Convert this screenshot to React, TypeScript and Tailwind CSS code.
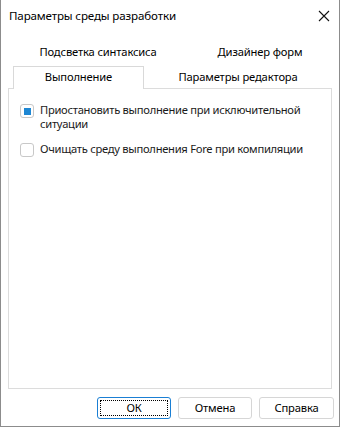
import React from 'react';

const font = { fontFamily: '"Noto Sans", "Liberation Sans", sans-serif' };

const Checkbox: React.FC<{ checked?: boolean; label: React.ReactNode }> = ({ checked, label }) => (
  <div className="flex items-start">
    <div className="mt-[1px] flex h-[14px] w-[14px] shrink-0 items-center justify-center rounded-[3px] border border-[#c8c8c8] bg-white">
      {checked && <div className="h-[7px] w-[7px] bg-[#1e87d3]" />}
    </div>
    <div className="ml-[6px] whitespace-nowrap text-[11.2px] leading-[14px] tracking-[-0.28px] text-[#1a1a1a]">
      {label}
    </div>
  </div>
);

export default function App() {
  return (
    <div
      style={font}
      className="flex h-[427px] w-[340px] flex-col border-x border-b border-[#8c8c8c] bg-white text-[11.2px] tracking-[-0.15px] text-black"
    >
      <div className="flex h-[32px] items-center justify-between pl-[8px] pr-[8px]">
        <span className="text-[11.6px]">Параметры среды разработки</span>
        <svg width="12" height="12" viewBox="0 0 12 12" className="mr-[1px]">
          <path d="M1 1 L11 11 M11 1 L1 11" stroke="#111" strokeWidth="1.1" />
        </svg>
      </div>

      <div className="mx-[7px] flex h-[34px] items-end whitespace-nowrap pb-[6px]">
        <div className="w-[180px] text-center leading-[16px]">Подсветка синтаксиса</div>
        <div className="flex-1 text-center leading-[16px]">Дизайнер форм</div>
      </div>

      <div className="mx-[7px] flex h-[22px] whitespace-nowrap">
        <div className="relative z-10 ml-[5px] -mb-px flex h-[23px] w-[131px] items-center justify-center border-x border-t border-[#d9d9d9] bg-white pb-[1px]">
          Выполнение
        </div>
        <div className="flex flex-1 items-center justify-center pt-[1px]">Параметры редактора</div>
      </div>

      <div className="mx-[7px] flex flex-1 flex-col gap-[11px] border border-[#dcdcdc] pl-[11px] pt-[14px]">
        <Checkbox
          checked
          label={
            <>
              Приостановить выполнение при исключительной
              <br />
              ситуации
            </>
          }
        />
        <Checkbox label="Очищать среду выполнения Fore при компиляции" />
      </div>

      <div className="flex h-[37px] items-start justify-end gap-[7px] pr-[5px] pt-[8px]">
        <button className="flex h-[22px] w-[74px] items-center justify-center rounded-[3px] border border-[#1a7fd4] bg-white p-[2px]">
          <span className="flex h-full w-full items-center justify-center border border-dotted border-black">
            ОК
          </span>
        </button>
        <button className="flex h-[22px] w-[74px] items-center justify-center rounded-[3px] border border-[#d6d6d6] bg-white">
          Отмена
        </button>
        <button className="flex h-[22px] w-[75px] items-center justify-center rounded-[3px] border border-[#d6d6d6] bg-white">
          Справка
        </button>
      </div>
    </div>
  );
}
